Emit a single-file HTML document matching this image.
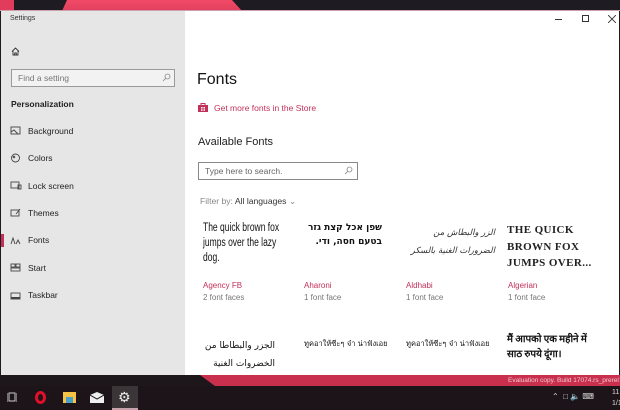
<!DOCTYPE html>
<html><head><meta charset="utf-8">
<style>
*{margin:0;padding:0;box-sizing:border-box}
body{width:620px;height:410px;overflow:hidden;position:relative;background:#1e1a1e;font-family:"Liberation Sans","DejaVu Sans",sans-serif}
.a{position:absolute}
.side{left:1px;top:11px;width:184px;height:364px;background:#e6e6e6}
.main{left:185px;top:11px;width:434px;height:364px;background:#fff}
.nav{left:28px;font-size:8.5px;color:#222}
.fp{font-size:9.5px;line-height:14px;color:#111}
.fn{font-size:8px;color:#c2305a}
.ff{font-size:8px;color:#777}
</style></head><body>
<div class="a" style="left:0;top:0;width:620px;height:11px;background:#1e1c22"></div>
<div class="a" style="left:0;top:0;width:14px;height:11px;background:#e23c5c"></div>
<div class="a" style="left:62px;top:0;width:180px;height:11px;background:linear-gradient(#f24a68,#e0405e);clip-path:polygon(5px 0,170px 0,180px 11px,0 11px)"></div>
<div class="a" style="left:0;top:10px;width:620px;height:1px;background:#c9a0ab"></div>

<div class="a side"></div>
<div class="a main"></div>

<div class="a" style="left:10px;top:15px;font-size:7px;color:#333">Settings</div>
<svg class="a" style="left:11px;top:47px" width="9" height="9" viewBox="0 0 9 9"><path d="M1 4.5L4.5 1L8 4.5M2 4v4h5V4M3.7 8V6h1.6v2" fill="none" stroke="#333" stroke-width=".9"/></svg>

<div class="a" style="left:11px;top:69px;width:164px;height:18px;border:1px solid #9a9a9a;background:#f2f2f2"></div>
<div class="a" style="left:18px;top:73px;font-size:8.5px;color:#777">Find a setting</div>
<svg class="a" style="left:162px;top:73px" width="9" height="9" viewBox="0 0 9 9"><circle cx="5.5" cy="3.5" r="2.5" fill="none" stroke="#888" stroke-width=".8"/><path d="M3.7 5.3L1 8" stroke="#888" stroke-width=".8"/></svg>

<div class="a" style="left:11px;top:99px;font-size:8.5px;font-weight:bold;color:#222">Personalization</div>

<div class="a nav" style="top:126px">Background</div>
<div class="a nav" style="top:153px">Colors</div>
<div class="a nav" style="top:181px">Lock screen</div>
<div class="a nav" style="top:208px">Themes</div>
<div class="a nav" style="top:235px">Fonts</div>
<div class="a nav" style="top:263px">Start</div>
<div class="a nav" style="top:290px">Taskbar</div>
<div class="a" style="left:1px;top:234px;width:3px;height:13px;background:#c2305a"></div>

<svg class="a" style="left:10px;top:126px" width="12" height="150" viewBox="0 0 12 150" fill="none" stroke="#444" stroke-width=".9">
<rect x="1" y="1" width="9" height="7"/><path d="M1 6l3-2 4 4"/>
<circle cx="5.5" cy="32" r="4"/><circle cx="4" cy="31" r=".8"/>
<rect x="1" y="56" width="8" height="6"/><rect x="8" y="59" width="3" height="4"/>
<rect x="1" y="84" width="8" height="6"/><path d="M6 88l4-5"/>
<path d="M1 118l2-6 2 6M6 118l2-4 2 4"/>
<rect x="1" y="138" width="4" height="3"/><rect x="6" y="138" width="4" height="3"/><rect x="1" y="142" width="9" height="3"/>
</svg>
<svg class="a" style="left:10px;top:292px" width="12" height="8" viewBox="0 0 12 8"><rect x="1" y="1" width="9" height="6" fill="none" stroke="#444" stroke-width=".9"/><rect x="1" y="5" width="9" height="2" fill="#444"/></svg>

<div class="a" style="left:555px;top:19px;width:7px;height:1px;background:#333"></div>
<div class="a" style="left:582px;top:15px;width:7px;height:7px;border:1px solid #333"></div>
<svg class="a" style="left:608px;top:15px" width="8" height="8" viewBox="0 0 8 8"><path d="M0 0L8 8M8 0L0 8" stroke="#333" stroke-width=".9"/></svg>

<div class="a" style="left:197px;top:71px;font-size:16px;color:#111">Fonts</div>
<svg class="a" style="left:198px;top:102px" width="10" height="10" viewBox="0 0 10 10"><path d="M3 3V1.5h4V3" fill="none" stroke="#c2305a"/><rect x="0" y="3" width="10" height="7" fill="#c2305a"/><rect x="3" y="5" width="1.5" height="1.5" fill="#fff"/><rect x="5.5" y="5" width="1.5" height="1.5" fill="#fff"/><rect x="3" y="7.3" width="1.5" height="1.5" fill="#fff"/><rect x="5.5" y="7.3" width="1.5" height="1.5" fill="#fff"/></svg>
<div class="a" style="left:214px;top:103px;font-size:8.5px;color:#c2305a">Get more fonts in the Store</div>
<div class="a" style="left:198px;top:136px;font-size:11px;color:#222">Available Fonts</div>
<div class="a" style="left:198px;top:162px;width:160px;height:18px;border:1px solid #888"></div>
<div class="a" style="left:205px;top:166px;font-size:8.5px;color:#666">Type here to search.</div>
<svg class="a" style="left:344px;top:166px" width="9" height="9" viewBox="0 0 9 9"><circle cx="5.5" cy="3.5" r="2.5" fill="none" stroke="#888" stroke-width=".8"/><path d="M3.7 5.3L1 8" stroke="#888" stroke-width=".8"/></svg>
<div class="a" style="left:200px;top:196px;font-size:8.6px;color:#888">Filter by: <span style="color:#333">All languages</span> <span style="color:#888">&#8964;</span></div>

<div class="a fp" style="left:203px;top:221px;width:108px;font-size:11.5px;line-height:15px;transform:scaleX(.74);transform-origin:0 0">The quick brown fox jumps over the lazy dog.</div>
<div class="a fp" style="left:300px;top:221px;width:82px;direction:rtl;text-align:right;font-weight:bold;font-size:9px;font-family:'DejaVu Sans',sans-serif">שפן אכל קצת גזר בטעם חסה, ודי.</div>
<div class="a fp" style="left:405px;top:224px;width:90px;direction:rtl;text-align:right;font-style:italic;font-size:8.5px;line-height:18px;color:#333;font-family:'DejaVu Sans',sans-serif">الزر والبطاش من الضرورات الغنية بالسكر</div>
<div class="a fp" style="left:507px;top:222px;width:95px;font-family:'Liberation Serif',serif;font-weight:bold;font-size:11px;line-height:16.5px;letter-spacing:.4px;color:#222">THE QUICK BROWN FOX JUMPS OVER...</div>

<div class="a fn" style="left:203px;top:281px">Agency FB</div><div class="a ff" style="left:203px;top:293px">2 font faces</div>
<div class="a fn" style="left:304px;top:281px">Aharoni</div><div class="a ff" style="left:304px;top:293px">1 font face</div>
<div class="a fn" style="left:406px;top:281px">Aldhabi</div><div class="a ff" style="left:406px;top:293px">1 font face</div>
<div class="a fn" style="left:508px;top:281px">Algerian</div><div class="a ff" style="left:508px;top:293px">1 font face</div>

<div class="a fp" style="left:203px;top:337px;width:72px;direction:rtl;text-align:right;font-size:9px;line-height:18px;font-family:'DejaVu Sans',sans-serif">الجزر والبطاطا من الخضروات الغنية</div>
<div class="a fp" style="left:304px;top:337px;font-size:7.5px;font-family:'DejaVu Sans',sans-serif">ทูคอาให้ซีะๆ จ๋า น่าฟังเอย</div>
<div class="a fp" style="left:406px;top:337px;font-size:7.5px;font-family:'DejaVu Sans',sans-serif">ทูคอาให้ซีะๆ จ๋า น่าฟังเอย</div>
<div class="a fp" style="left:507px;top:330px;width:95px;font-size:10px;font-weight:bold;line-height:15px;font-family:'Noto Sans CJK SC','DejaVu Sans',sans-serif">मैं आपको एक महीने में साठ रुपये दूंगा।</div>

<div class="a" style="left:0;top:375px;width:620px;height:11px;background:#1d171b"></div>
<div class="a" style="left:200px;top:375px;width:420px;height:11px;background:#c8304e;clip-path:polygon(0 0,100% 0,100% 100%,15px 100%)"></div>
<div class="a" style="left:508px;top:377px;font-size:6.5px;color:#f0c8d0;white-space:nowrap">Evaluation copy. Build 17074.rs_prerel</div>
<div class="a" style="left:0;top:386px;width:620px;height:24px;background:#1c1418"></div>
<div class="a" style="left:112px;top:386px;width:26px;height:24px;background:#3b3537"></div>
<div class="a" style="left:112px;top:408px;width:26px;height:2px;background:#c8a0aa"></div>
<svg class="a" style="left:7px;top:392px" width="10" height="11" viewBox="0 0 10 11"><rect x="2" y="1" width="6" height="8" fill="none" stroke="#ccc"/><path d="M0 1v9M10 1v9" stroke="#ccc"/></svg>
<div class="a" style="left:35px;top:391px;width:11px;height:13px;border:3px solid #e0102a;border-radius:50%"></div>
<div class="a" style="left:63px;top:392px;width:13px;height:11px;background:#f5c445"></div>
<div class="a" style="left:66px;top:397px;width:7px;height:6px;background:#4aa0c8"></div>
<svg class="a" style="left:90px;top:392px" width="14" height="11" viewBox="0 0 14 11"><path d="M0 3L7 0l7 3v8H0z" fill="#eee"/><path d="M0 3l7 4 7-4" stroke="#1c1418" fill="none"/></svg>
<div class="a" style="left:118px;top:389px;font-size:14px;color:#eee">&#9881;</div>
<div class="a" style="left:552px;top:392px;font-size:8px;color:#ddd;white-space:nowrap">&#8963;&nbsp;&nbsp;&#9633; &#128264; &#9000;</div>
<div class="a" style="left:612px;top:387px;font-size:7px;color:#ddd;line-height:11px">11<br>1/1</div>
</body></html>
